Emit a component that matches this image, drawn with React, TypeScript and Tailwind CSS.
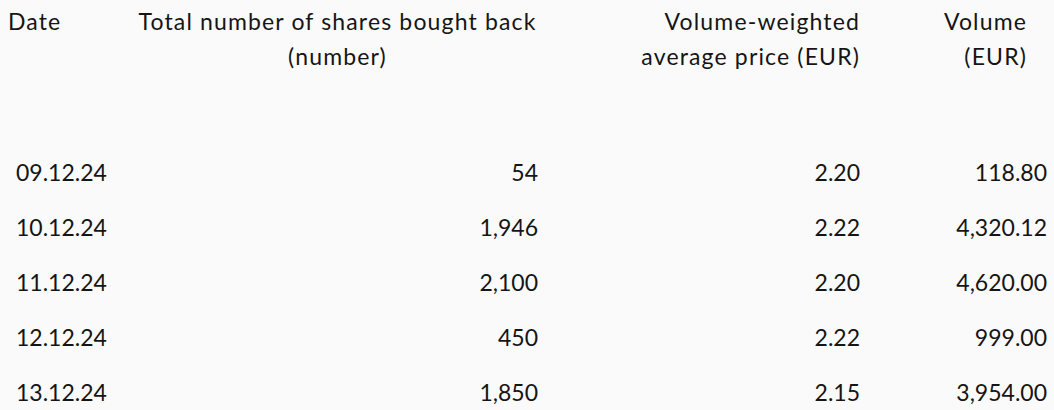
const rows = [
  { date: "09.12.24", shares: "54", price: "2.20", volume: "118.80" },
  { date: "10.12.24", shares: "1,946", price: "2.22", volume: "4,320.12" },
  { date: "11.12.24", shares: "2,100", price: "2.20", volume: "4,620.00" },
  { date: "12.12.24", shares: "450", price: "2.22", volume: "999.00" },
  { date: "13.12.24", shares: "1,850", price: "2.15", volume: "3,954.00" },
];

export default function App() {
  return (
    <div className="h-[410px] w-[1054px] overflow-hidden bg-[#fafafa] font-['Lato',sans-serif] text-[23px] leading-[35px] text-[#151515]">
      <div className="grid grid-cols-[130px_418px_322px_184px] pb-[71px] pt-1 tracking-[0.05em]">
        <div className="pl-2">Date</div>
        <div className="pl-[7px] pr-[10px] text-center">
          Total number of shares bought back
          <br />
          (number)
        </div>
        <div className="pr-[10px] text-right">
          Volume-weighted
          <br />
          average price (EUR)
        </div>
        <div className="pr-[27px] text-right">
          Volume
          <br />
          (EUR)
        </div>
      </div>
      {rows.map((r) => (
        <div key={r.date} className="grid grid-cols-[130px_418px_322px_184px] py-[10px]">
          <div className="pl-[16px]">{r.date}</div>
          <div className="pr-[10px] text-right">{r.shares}</div>
          <div className="pr-[10px] text-right">{r.price}</div>
          <div className="pr-[7px] text-right">{r.volume}</div>
        </div>
      ))}
    </div>
  );
}
